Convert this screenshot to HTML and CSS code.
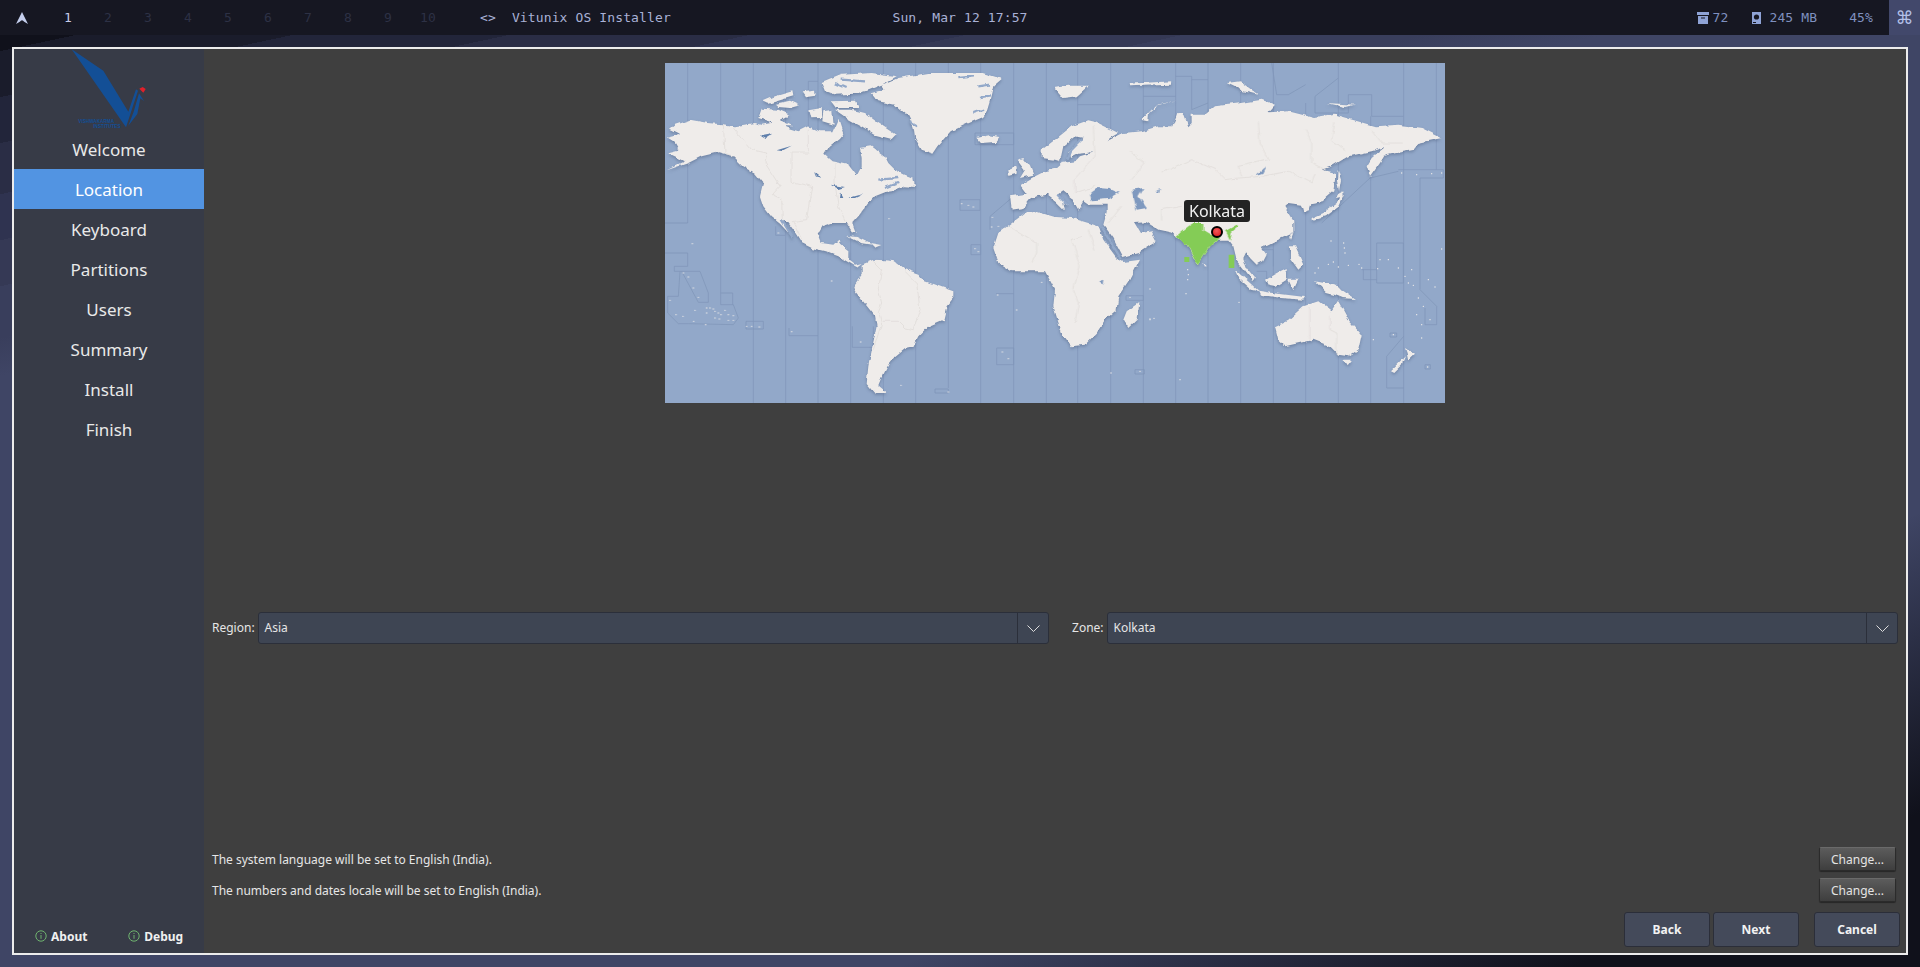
FILE: index.html
```html
<!DOCTYPE html>
<html lang="en">
<head>
    <meta charset="UTF-8">
    <meta name="viewport" content="width=device-width, initial-scale=1.0">
    <title>Vitunix OS Installer</title>
    <link rel="stylesheet" href="styles.css">
</head>
<body>
    <header class="topbar">
        <div class="bar-left">
            <div class="wm-logo">
                <svg width="12" height="12" viewBox="0 0 12 12"><path class="wm-shape" d="M6 0 L12 12 L8.2 9.8 Q6 6.8 3.8 9.8 L0 12 Z"/></svg>
            </div>
            <span class="ws active">1</span>
            <span class="ws">2</span>
            <span class="ws">3</span>
            <span class="ws">4</span>
            <span class="ws">5</span>
            <span class="ws">6</span>
            <span class="ws">7</span>
            <span class="ws">8</span>
            <span class="ws">9</span>
            <span class="ws">10</span>
            <span class="layout">&lt;&gt;</span>
            <span class="title">Vitunix OS Installer</span>
        </div>
        <div class="clock">Sun, Mar 12 17:57</div>
        <div class="bar-right">
            <svg class="stat-icon box" width="12" height="12" viewBox="0 0 12 12"><path d="M0 0h12v3H0z"/><path d="M1 4h10v8H1z"/><path class="notch" d="M4 5.5h4v1H4z"/></svg>
            <span class="stat stat-pkg">72</span>
            <svg class="stat-icon disk" width="9" height="12" viewBox="0 0 9 12"><path d="M0 0h9v12H0z"/><circle class="notch" cx="4.5" cy="5" r="2.6"/><path class="notch" d="M1 10h3v1H1z"/></svg>
            <span class="stat stat-disk">245 MB</span>
            <span class="stat stat-bat">45%</span>
            <div class="cmd">⌘</div>
        </div>
    </header>

    <div class="window">
        <aside class="sidebar">
            <svg class="logo" width="190" height="80" viewBox="42 57 570 240">
                <path class="logo-blue" d="M215 58 L310 122 L385 245 L408 178 L414 182 L378 292 Z"/>
                <path class="logo-blue" d="M417 190 L432 213 L421 205 L412 252 L385 287 L401 245 Z"/>
                <path class="logo-red" d="M418 176 L428 171 L437 177 L430 188 Z"/>
                <text class="logo-text" x="235" y="278">VISHWAKARMA</text>
                <text class="logo-text" x="280" y="293">INSTITUTES</text>
            </svg>
            <nav class="steps">
                <div class="step">Welcome</div>
                <div class="step current">Location</div>
                <div class="step">Keyboard</div>
                <div class="step">Partitions</div>
                <div class="step">Users</div>
                <div class="step">Summary</div>
                <div class="step">Install</div>
                <div class="step">Finish</div>
            </nav>
            <div class="side-links">
                <div class="side-link">
                    <svg width="12" height="12" viewBox="0 0 12 12"><circle class="info-ring" cx="6" cy="6" r="5.2"/><path class="info-ring" d="M6 5v3.8M6 3v1"/></svg>
                    About
                </div>
                <div class="side-link">
                    <svg width="12" height="12" viewBox="0 0 12 12"><circle class="info-ring" cx="6" cy="6" r="5.2"/><path class="info-ring" d="M6 5v3.8M6 3v1"/></svg>
                    Debug
                </div>
            </div>
        </aside>

        <main class="content">
            <div class="map">
                <svg width="780" height="340" viewBox="0 0 2340 1020">
                    <defs>
                        <filter id="coast" filterUnits="userSpaceOnUse" x="0" y="0" width="2340" height="1020" color-interpolation-filters="sRGB">
                            <feTurbulence type="fractalNoise" baseFrequency="0.035" numOctaves="3" seed="4"/>
                            <feDisplacementMap in="SourceGraphic" scale="14" xChannelSelector="R" yChannelSelector="G"/>
                        </filter>
                    </defs>

                    <path class="tz" d="M68 0V480M68 570V610M167 0V690M265 0V1020M362 0V1020M459 0V1020M557 0V1020M655 0V1020M752 0V1020M850 0V975M947 0V1020M1046 0V1020M1144 0V1020
                        M0 480H68M0 570H68M68 610H28V625H105L130 690V718H100L50 625M45 625L40 700H8V750L40 782H70L205 785L220 765L205 725H167V690H203V725
                        M243 775H295V798H243ZM372 795V818H459M562 790V853H625V790M332 490V517H360M885 410V442H945V410ZM918 545H947V575H918ZM930 210V245H1046V210ZM975 500V460L1040 405M995 855V905H1046V855ZM993 692H1046M810 978H850V990H810ZM430 55H459M430 55V190"/>
                    <path class="tz" transform="translate(1170 0)" d="M68 0V1020M167 0V1020M265 0V1020M362 0V1020M459 0V1020M557 0V1020M655 0V1020M752 120V1020M850 45V1020M947 160V1020M1046 0V1020M1144 0V320M1095 345V680
                        M68 125H167M265 100H362M362 40H410V140L459 120M459 50H410M650 0L665 95H700L752 65M850 0V45L780 100V150H880V95H950V160H1045M1030 320H1165V345H1095M1095 680L1145 730V785H1110V735M965 540H1045V660H965ZM1030 325L945 345L800 480M995 880L1046 820M995 880V975H1046M240 920H268V933H240ZM213 698H265V712H213ZM1005 810H1025V822H1005ZM1110 905H1126V918H1110ZM610 560H655V610M605 625H635V670M920 620H965M925 620V650H965"/>

                    <g class="land">
                        <g filter="url(#coast)">
                            <!-- americas and greenland -->
                            <path d="M5 222L45 212L15 197L30 185L75 170L130 180L175 184L210 190L270 180L290 185L330 178L370 195L400 205L430 190L465 205L505 205L520 170L535 215L525 228L490 255L478 275L500 295L550 305L565 325L575 338L590 310L590 285L585 255L620 250L660 280L670 300L690 320L720 335L745 345L750 372L720 370L680 385L660 388L630 400L610 420L595 440L580 460L562 480L572 507L560 505L545 480L500 480L470 490L458 510L470 540L505 545L520 530L525 545L550 565L550 590L570 605L590 600L575 612L545 595L520 580L480 565L440 555L410 540L385 500L370 480L350 470L382 522L345 482L320 462L295 430L285 400L295 360L270 330L235 310L205 280L160 268L110 280L70 300L5 322L60 295L20 275L10 268L40 260L25 235Z"/>
                            <path d="M280 165L290 137L340 140L375 155L345 172L385 190L345 190L320 178Z"/>
                            <path d="M295 115L330 100L382 85L385 100L350 110L310 122Z"/>
                            <path d="M330 122L375 113L405 127L375 135L340 132Z"/>
                            <path d="M470 60L530 35L620 30L695 40L650 65L600 85L570 92L510 95L480 85Z"/>
                            <path d="M410 85L450 80L452 95L420 100Z"/>
                            <path d="M495 115L570 113L580 135L510 135Z"/>
                            <path d="M510 140L560 140L600 150L640 180L692 215L680 228L630 215L590 190L545 165Z"/>
                            <path d="M430 142L470 135L472 165L436 166Z"/>
                            <path d="M475 145L502 140L506 185L472 175Z"/>
                            <path d="M620 90L655 80L650 65L700 45L790 30L950 30L1010 48L985 70L975 110L960 160L900 185L860 205L820 250L805 272L770 260L750 225L745 190L730 160L690 125L640 115Z"/>
                            <path d="M935 225L975 217L1003 222L990 240L950 243Z"/>
                            <path d="M545 518L575 522L622 545L590 541ZM618 540L652 546L632 554ZM590 605L625 590L660 592L690 595L720 618L760 632L780 655L865 685L865 705L845 730L835 770L790 790L760 820L745 850L720 855L690 880L670 905L650 945L640 970L665 990L630 990L605 960L610 910L620 860L635 790L630 760L570 685L565 670L590 635Z"/>
                            <path d="M1058 290L1075 285L1095 310L1105 335L1065 345L1080 320ZM1030 320L1055 310L1055 332L1032 338Z"/>
                            <path class="cut" d="M510 60L545 75M530 50L600 55M880 45L930 40M940 70L975 65M945 105L975 100M925 150L955 140M735 175L760 190M640 350L700 345M660 375L700 360M350 470L382 522"/>

                            <!-- eurasia, africa, islands -->
                            <g transform="translate(1170 0)">
                                <path d="M-30 325L0 318L20 300L60 295L75 280L115 268L70 272L45 285L40 265L70 240L85 225L60 220L25 250L15 295L0 290L-40 285L-40 260L0 230L50 190L100 172L125 178L190 210L165 225L155 235L205 210L260 205L310 190L355 190L370 150L385 150L400 190L410 180L410 155L450 155L480 130L560 120L620 110L660 125L640 148L700 145L780 165L840 155L960 190L1030 185L1100 195L1160 225L1090 240L1075 258L1020 268L990 275L975 300L945 342L935 310L950 285L990 252L950 265L880 280L830 310L800 320L840 330L840 350L835 385L800 415L770 420L762 445L745 450L738 425L700 420L690 430L715 470L715 510L670 530L640 545L620 555L635 575L625 595L605 605L585 585L575 565L565 585L575 615L600 645L595 655L565 615L545 590L535 550L520 530L490 530L470 545L440 590L428 607L395 545L370 525L355 510L310 500L275 478L240 480L258 510L290 505L305 535L250 570L205 582L175 525L145 485L155 450L155 425L100 425L85 415L70 440L50 405L25 385L10 395L45 430L25 420L30 445L0 415L-25 395L-55 400L-75 410L-95 435L-130 440L-135 400L-85 392L-105 365L-70 345Z"/>
                                <path d="M-185 555L-170 510L-110 465L-85 445L-60 445L0 462L50 465L100 480L130 490L145 530L185 585L205 597L255 590L230 640L190 700L185 740L150 770L125 810L90 845L50 850L20 810L-5 730L0 680L-30 625L-130 625L-170 600Z"/>
                                <path d="M205 770L215 745L250 720L245 770L220 795Z"/>
                                <path d="M0 75L40 68L100 68L65 100L25 105Z"/>
                                <path d="M260 170L300 130L370 110L310 125L282 150L280 175Z"/>
                                <path d="M220 62L350 55L345 65L225 70Z"/>
                                <path d="M515 60L555 55L610 95L565 85Z"/>
                                <path d="M815 120L900 125L870 132Z"/>
                                <path d="M770 465L805 450L845 420L860 385L866 395L850 430L810 460L770 472ZM845 395L865 385L866 400L840 405ZM848 320L858 350L852 385L846 350Z"/>
                                <path d="M630 650L665 630L695 615L695 650L660 672L640 668Z"/>
                                <path d="M540 620L585 660L612 685L590 680L550 645Z"/>
                                <path d="M610 683L670 692L750 702L745 710L680 705L615 695Z"/>
                                <path d="M700 650L730 650L715 682ZM705 550L720 550L745 605L730 620L705 585ZM705 515L715 510L708 528ZM445 602L455 612L450 618Z"/>
                                <path d="M780 655L820 662L850 670L860 680L900 708L860 705L835 695L815 690L795 670Z"/>
                                <path d="M660 790L700 770L745 730L790 715L830 745L850 715L880 770L920 815L910 860L880 880L850 875L825 850L775 830L690 850L670 830Z"/>
                                <path d="M865 893L888 893L875 910ZM1005 925L1030 900L1050 880L1040 905L1015 930ZM1050 855L1080 875L1060 895L1055 870Z"/>
                                <path class="cut" d="M138 492L200 590M35 290L45 265L82 228M10 395L40 425"/>
                            </g>
                        </g>
                    </g>

                    <g filter="url(#coast)">
                        <path class="border" d="M175 184L180 270L205 280M205 195L260 260L305 270L300 300L345 370L322 395L350 408L352 470M378 270V355L440 370L425 470L385 475L410 530M430 200V270H378M510 300V360L520 430L540 475M625 595L650 620L640 680L650 720L640 745L650 780L625 860M720 625L755 660L765 740L745 800L720 795L700 775H650"/>
                        <path class="border" transform="translate(1170 0)" d="M-135 490L-55 540L-55 570L-70 600M80 520L50 530L75 610L55 680L70 720L60 780M320 330L410 290L480 320L510 350L550 345L620 340L700 325L770 360L780 330M115 190L120 280L60 350L60 390L120 370M225 265L270 300L230 350M610 175L615 240L640 290L550 310L560 340M750 200L770 240L770 300L810 320M840 175L830 230L870 260M950 200L980 240L1040 240M320 470V440L380 430M765 735V830M825 755V800L845 810V875M200 430L160 480M100 500L120 560"/>

                        <!-- lakes and inland seas -->
                        <path class="lake" d="M285 220L325 212L300 228ZM335 262L380 248L350 264ZM450 320L465 345L455 340ZM500 365L540 372L520 378ZM525 385L535 405L522 405ZM550 405L595 393L570 405Z"/>
                        <path class="inland" transform="translate(1170 0)" d="M105 395L130 375L165 378L192 390L160 408L110 412ZM230 380L265 375L250 400L275 435L245 440ZM305 385L318 378L316 390ZM130 655L145 650L143 665ZM603 337L635 310L625 330Z"/>

                        <path class="india" transform="translate(1170 0)" d="M365 518L400 490L415 480L445 480L445 500L470 515L495 525L470 545L440 590L428 607L420 590L395 545L380 535ZM510 505L545 485L555 490L530 510L525 530L515 510Z"/>
                    </g>
                    <path class="india" transform="translate(1170 0)" d="M521 575H538V615H521ZM388 582H403V597H388Z"/>

                    <path class="dots" d="M55 630h.1M70 642h.1M85 675h.1M100 703h.1M15 712h.1M33 755h.1M54 760h.1M86 775h.1M122 785h.1M90 742h.1M125 735h.1M135 735h.1M145 738h.1M150 745h.1M160 750h.1M125 750h.1M168 755h.1M180 742h.1M190 755h.1M205 758h.1M190 772h.1M205 772h.1M150 765h.1M163 768h.1M245 790h.1M260 790h.1M283 792h.1M380 806h.1M340 510h.1M890 422h.1M910 427h.1M925 432h.1M982 463h.1M980 492h.1M1000 490h.1M930 557h.1M940 566h.1M82 542h.1M672 467h.1M500 654h.1M587 837h.1M708 967h.1M850 987h.1M998 696h.1M1055 741h.1M1012 867h.1M1030 887h.1M1130 658h.1"/>
                    <path class="dots" transform="translate(1170 0)" d="M285 678h.1M225 703h.1M393 692h.1M285 768h.1M297 766h.1M398 620h.1M400 635h.1M398 650h.1M552 718h.1M828 534h.1M866 540h.1M868 555h.1M870 570h.1M820 604h.1M835 597h.1M850 612h.1M880 607h.1M912 604h.1M920 615h.1M968 617h.1M975 590h.1M1000 590h.1M1030 615h.1M1070 620h.1M1050 640h.1M1060 660h.1M1075 667h.1M1120 650h.1M1140 672h.1M1090 705h.1M1105 730h.1M1085 755h.1M1125 770h.1M1100 785h.1M1100 825h.1M955 830h.1M1015 815h.1M1118 912h.1M1160 558h.1M1040 330h.1M1085 335h.1M1130 332h.1M1160 330h.1M255 925h.1M168 930h.1M375 950h.1M285 770h.1M780 630h.1M790 615h.1"/>
                </svg>
                <div class="pin"></div>
                <div class="tip">Kolkata</div>
            </div>

            <div class="zone-row">
                <label class="field-label">Region:</label>
                <div class="combo">
                    <span class="combo-text">Asia</span>
                    <span class="combo-arrow"><svg width="13" height="7" viewBox="0 0 13 7"><path d="M.5 .5L6.5 6.5L12.5 .5"/></svg></span>
                </div>
                <label class="field-label zone-label">Zone:</label>
                <div class="combo">
                    <span class="combo-text">Kolkata</span>
                    <span class="combo-arrow"><svg width="13" height="7" viewBox="0 0 13 7"><path d="M.5 .5L6.5 6.5L12.5 .5"/></svg></span>
                </div>
            </div>

            <div class="locale-rows">
                <div class="locale-row">
                    <span>The system language will be set to English (India).</span>
                    <button class="change">Change...</button>
                </div>
                <div class="locale-row">
                    <span>The numbers and dates locale will be set to English (India).</span>
                    <button class="change">Change...</button>
                </div>
            </div>

            <div class="actions">
                <button class="action">Back</button>
                <button class="action">Next</button>
                <button class="action cancel">Cancel</button>
            </div>
        </main>
    </div>
</body>
</html>
```

FILE: styles.css
```css
* {
    box-sizing: border-box;
}

html, body {
    height: 100%;
}

body {
    margin: 0;
    overflow: hidden;
    font-family: "Noto Sans", sans-serif;
    font-size: 12px;
    color: #e6e6e6;
    background-color: #3f4565;
    background-image:
        linear-gradient(156deg, rgba(16, 17, 27, 0) 1248px, #10111b 1524px),
        linear-gradient(168deg, #10111b 50px, #1a1c2b 50px, #1a1c2b 95px, #22253a 95px, #22253a 140px, #2a2d45 140px, #2a2d45 190px, #2f3350 190px, #2f3350 235px, #353955 235px, #353955 280px, #393e5c 280px, #393e5c 330px, #3f4565 368px);
}

/* top bar */
.topbar {
    display: grid;
    grid-template-columns: 1fr auto 1fr;
    align-items: center;
    height: 35px;
    background-color: #161722;
    font-family: "DejaVu Sans Mono", monospace;
    font-size: 13px;
    letter-spacing: 0.12px;
    color: #a9b1d6;
}

.bar-left,
.bar-right {
    display: flex;
    align-items: center;
    height: 35px;
}

.bar-right {
    justify-content: flex-end;
}

.wm-logo {
    display: flex;
    justify-content: center;
    width: 48px;
    padding-right: 4px;
}

.wm-shape {
    fill: #c5cfee;
}

.ws {
    width: 40px;
    text-align: center;
    color: #2d3145;
}

.ws.active {
    color: #c6cde8;
}

.layout {
    margin-left: 32px;
    color: #a9b1d6;
}

.title {
    margin-left: 16px;
}

.stat-icon path,
.stat-icon circle {
    fill: #8fa3d6;
}

.stat-icon .notch {
    fill: #161722;
}

.stat {
    color: #7f90bf;
}

.stat-pkg {
    margin-left: 4px;
}

.disk {
    margin-left: 24px;
}

.stat-disk {
    margin-left: 8px;
}

.stat-bat {
    margin-left: 32px;
}

.cmd {
    display: flex;
    align-items: center;
    justify-content: center;
    width: 31px;
    height: 35px;
    margin-left: 16px;
    background-color: #42486b;
    color: #b4c1e8;
    font-family: "DejaVu Sans", sans-serif;
    font-size: 18px;
}

/* installer window */
.window {
    display: flex;
    height: 908px;
    margin: 12px;
    border: 2px solid #ececec;
    background-color: #3f3f3f;
}

.sidebar {
    display: flex;
    flex-direction: column;
    width: 190px;
    background-color: #373b47;
}

.logo {
    display: block;
    flex: none;
}

.logo-blue {
    fill: #134f96;
}

.logo-red {
    fill: #e0202a;
}

.logo-text {
    font-family: "Liberation Sans", sans-serif;
    font-size: 14px;
    font-weight: bold;
    fill: #134f96;
}

.step {
    height: 40px;
    line-height: 42px;
    text-align: center;
    font-size: 17px;
    color: #e9e9e9;
}

.step.current {
    background-color: #5294e2;
    color: #fff;
}

.side-links {
    display: flex;
    margin-top: auto;
    padding-right: 1px;
}

.side-link {
    display: flex;
    flex: 1;
    align-items: center;
    justify-content: center;
    gap: 4px;
    height: 34px;
    font-weight: bold;
    color: #f0f0f0;
}

.info-ring {
    fill: none;
    stroke: #6fb36f;
    stroke-width: 1;
}

.content {
    display: flex;
    flex: 1;
    flex-direction: column;
    padding: 14px 6px 6px 8px;
}

/* map */
.map {
    position: relative;
    flex: none;
    width: 780px;
    height: 340px;
    margin-left: 453px;
    background-color: #92a8c9;
}

.map svg {
    display: block;
}

.tz {
    fill: none;
    stroke: #8095b8;
    stroke-width: 2.2;
}

.land {
    fill: #efecea;
    filter: drop-shadow(0 5px 4px rgba(60, 78, 110, 0.4));
}

.cut {
    fill: none;
    stroke: #92a8c9;
    stroke-width: 7;
}

.border {
    fill: none;
    stroke: #dedad7;
    stroke-width: 2;
}

.lake {
    fill: #5f7fab;
}

.inland {
    fill: #7f99bf;
}

.india {
    fill: #84cc56;
}

.dots {
    fill: none;
    stroke: #efecea;
    stroke-width: 4;
    stroke-linecap: round;
}

.pin {
    position: absolute;
    left: 546px;
    top: 163px;
    width: 12px;
    height: 12px;
    border: 2px solid #000;
    border-radius: 50%;
    background: radial-gradient(circle at 45% 35%, #f25a5a, #d8141c);
}

.tip {
    position: absolute;
    left: 519px;
    top: 137px;
    width: 66px;
    height: 22px;
    line-height: 22px;
    text-align: center;
    border-radius: 3px;
    background-color: #232323;
    box-shadow: 0 0 0 1px rgba(255, 255, 255, 0.08);
    font-size: 16px;
    color: #f2f2f2;
}

/* region and zone */
.zone-row {
    display: flex;
    align-items: center;
    margin-top: 209px;
    padding-right: 2px;
}

.field-label {
    margin-right: 3px;
    margin-bottom: 2px;
}

.zone-label {
    margin-left: 23px;
}

.combo {
    display: flex;
    flex: 1;
    align-items: stretch;
    height: 32px;
    border: 1px solid #2b2f3a;
    border-radius: 3px;
    background-color: #3e4553;
}

.combo-text {
    flex: 1;
    padding-left: 6px;
    line-height: 29px;
}

.combo-arrow {
    display: flex;
    align-items: center;
    justify-content: center;
    width: 31px;
    border-left: 1px solid #2b2f3a;
}

.combo-arrow path {
    fill: none;
    stroke: #dcdcdc;
}

/* locale */
.locale-rows {
    display: flex;
    flex-direction: column;
    gap: 7px;
    margin-top: auto;
    padding-right: 4px;
}

.locale-row {
    display: flex;
    align-items: center;
    justify-content: space-between;
}

.change {
    width: 77px;
    height: 24px;
    padding: 0;
    border: 1px solid #2b2b2b;
    border-top-color: #6a6a6a;
    border-radius: 2px;
    background: linear-gradient(#5c5c5c, #3e3e3e);
    box-shadow: 0 1px 1px rgba(0, 0, 0, 0.4);
    font-family: inherit;
    font-size: 12px;
    color: #e4e4e4;
}

/* bottom buttons */
.actions {
    display: flex;
    justify-content: flex-end;
    gap: 3px;
    margin-top: 10px;
}

.action {
    width: 86px;
    height: 35px;
    padding: 0;
    border: 1px solid #2b2e39;
    border-radius: 3px;
    background-color: #444a5a;
    font-family: inherit;
    font-size: 12px;
    font-weight: bold;
    color: #f2f2f2;
}

.cancel {
    margin-left: 12px;
}
```
